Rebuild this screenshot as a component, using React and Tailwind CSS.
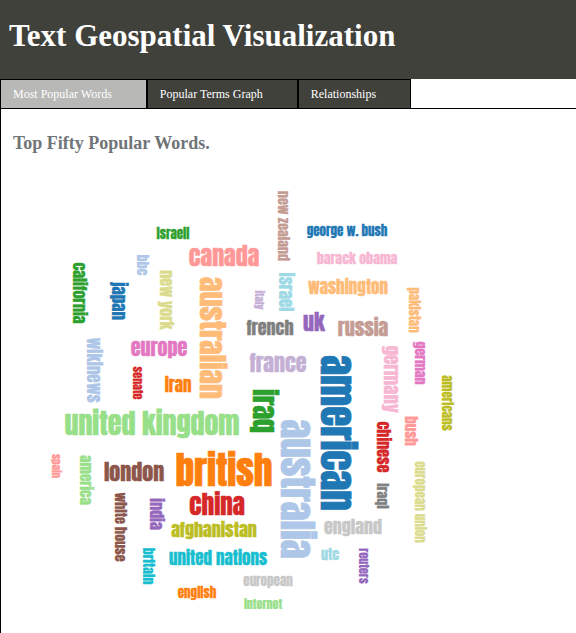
import { useState } from "react";

const tabs = ["Most Popular Words", "Popular Terms Graph", "Relationships"];

// across: [text, colour, size, centre x, baseline y]
const across = [
  ["israeli", "#2ca02c", 13, 173, 238],
  ["canada", "#ff9896", 24, 224, 265],
  ["george w. bush", "#1f77b4", 13, 347, 235],
  ["barack obama", "#f7b6d2", 14, 357, 263],
  ["washington", "#ffbb78", 17, 348, 293],
  ["french", "#7f7f7f", 18, 270, 334],
  ["uk", "#9467bd", 22, 314, 330],
  ["russia", "#c49c94", 20, 363, 335],
  ["europe", "#e377c2", 20, 159, 355],
  ["iran", "#ff7f0e", 17, 178, 391],
  ["united kingdom", "#98df8a", 28, 152, 434],
  ["france", "#c5b0d5", 22, 278, 371],
  ["london", "#8c564b", 22, 134, 480],
  ["british", "#ff7f0e", 37, 224, 485],
  ["china", "#d62728", 25, 217, 514],
  ["afghanistan", "#bcbd22", 18, 214, 536],
  ["united nations", "#17becf", 17, 218, 564],
  ["european", "#c7c7c7", 13, 268, 585],
  ["english", "#ff7f0e", 13, 197, 597],
  ["internet", "#98df8a", 12, 263, 609],
  ["england", "#c7c7c7", 18, 353, 533],
  ["utc", "#9edae5", 14, 330, 559],
];

// down: [text, colour, size, baseline x, centre y]
const down = [
  ["new zealand", "#c49c94", 14, 279, 226],
  ["california", "#2ca02c", 16, 74, 293],
  ["bbc", "#aec7e8", 14, 138, 265],
  ["japan", "#1f77b4", 17, 113, 301],
  ["new york", "#dbdb8d", 16, 161, 300],
  ["australian", "#ffbb78", 30, 201, 338],
  ["israel", "#9edae5", 17, 280, 292],
  ["italy", "#c5b0d5", 11, 255, 300],
  ["pakistan", "#ffbb78", 13, 410, 310],
  ["wikinews", "#aec7e8", 17, 88, 370],
  ["senate", "#d62728", 12, 133, 383],
  ["iraq", "#2ca02c", 28, 254, 411],
  ["american", "#1f77b4", 41, 323, 433],
  ["australia", "#aec7e8", 39, 283, 489],
  ["germany", "#f7b6d2", 19, 385, 379],
  ["german", "#e377c2", 14, 416, 363],
  ["americans", "#bcbd22", 13, 443, 403],
  ["bush", "#ff9896", 15, 406, 431],
  ["chinese", "#d62728", 16, 378, 447],
  ["european union", "#dbdb8d", 13, 416, 502],
  ["iraqi", "#7f7f7f", 14, 378, 496],
  ["spain", "#ff9896", 11, 52, 466],
  ["america", "#98df8a", 15, 81, 480],
  ["white house", "#8c564b", 14, 116, 527],
  ["india", "#9467bd", 16, 151, 514],
  ["britain", "#17becf", 14, 144, 566],
  ["reuters", "#9467bd", 12, 359, 566],
];

function Word({ text, color, size, x, y, rotate }) {
  return (
    <text
      dy="0.04em"
      textAnchor="middle"
      transform={`translate(${x} ${y}) rotate(${rotate})`}
      fontSize={size}
      fill={color}
      stroke={color}
      strokeWidth={size * 0.02}
    >
      {text}
    </text>
  );
}

function WordCloud() {
  return (
    <svg
      viewBox="1 165 575 468"
      role="img"
      aria-label="Top fifty popular words"
      className="block w-[575px] max-w-full font-['Impact','Anton','Roboto_Condensed','Liberation_Sans',sans-serif]"
    >
      {across.map(([text, color, size, x, y]) => (
        <Word key={text} text={text} color={color} size={size} x={x} y={y} rotate={0} />
      ))}
      {down.map(([text, color, size, x, y]) => (
        <Word key={text} text={text} color={color} size={size} x={x} y={y} rotate={90} />
      ))}
    </svg>
  );
}

export default function App() {
  const [active, setActive] = useState(0);
  return (
    <div className="flex min-h-screen flex-col bg-white font-['Liberation_Serif',serif]">
      <header className="bg-[#41413c] px-[9px] pt-4 pb-6">
        <h1 className="text-[31px] leading-[39px] font-bold text-white">Text Geospatial Visualization</h1>
      </header>
      <nav role="tablist" className="flex">
        {tabs.map((label, i) => (
          <button
            key={label}
            type="button"
            role="tab"
            aria-selected={active === i}
            onClick={() => setActive(i)}
            className={`border border-b-0 border-black py-[6px] pr-[34px] pl-3 text-left text-xs text-white ${
              active === i ? "bg-[#b8b8b6]" : "bg-[#41413c]"
            }`}
          >
            {label}
          </button>
        ))}
      </nav>
      <main className="flex-1 border-t border-l border-black">
        <h2 className="px-3 pt-[22px] pb-[10px] text-lg leading-6 font-bold text-[#6f7478]">Top Fifty Popular Words.</h2>
        <WordCloud />
      </main>
    </div>
  );
}
